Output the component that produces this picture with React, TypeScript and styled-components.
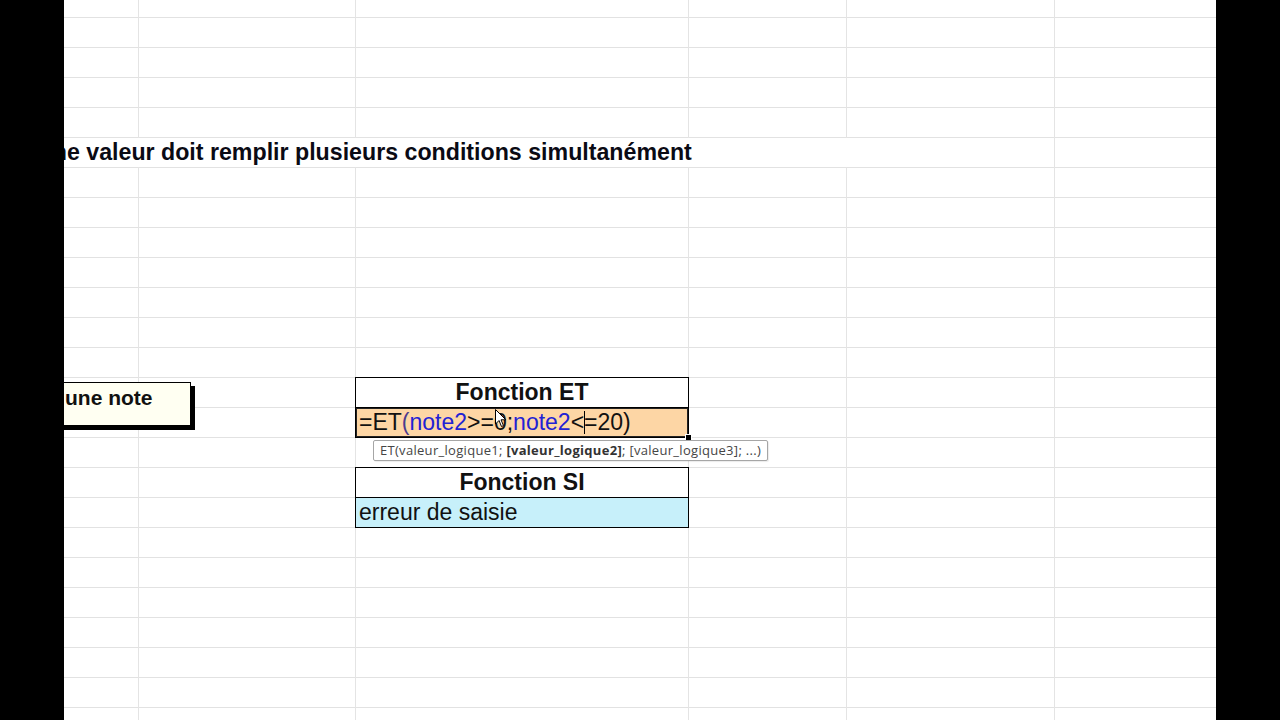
import styled, { createGlobalStyle } from 'styled-components'

const GlobalStyle = createGlobalStyle`
  html, body {
    margin: 0;
    background: #000;
  }
  body {
    font-family: 'Liberation Sans', Arial, sans-serif;
  }
`

const Screen = styled.div`
  display: flex;
  width: 1280px;
  height: 720px;
  background: #000;
`

const Letterbox = styled.div`
  flex: none;
  width: 64px;
  background: #000;
`

// feuille : lignes horizontales toutes les 30px en fond
const Sheet = styled.div`
  position: relative;
  flex: none;
  width: 1152px;
  height: 720px;
  overflow: hidden;
  background-color: #fff;
  background-image: linear-gradient(to bottom, transparent 29px, #e2e2e2 29px);
  background-size: 100% 30px;
  background-position: 0 -12px;
`

const Grid = styled.div`
  display: grid;
  grid-template-columns: 115px 217px 333px 158px 208px 300px;
  grid-template-rows: repeat(25, 30px);
  margin: -12px 0 0 -40px;
`

const ColumnLine = styled.div<{ $col: number }>`
  grid-column: ${(p) => p.$col};
  grid-row: 1 / -1;
  border-right: 1px solid #e4e4e4;
`

const Title = styled.div`
  grid-column: 1 / 5;
  grid-row: 6;
  height: 29px;
  padding-left: 12px;
  background: #fff;
  font-size: 23.2px;
  font-weight: bold;
  line-height: 29px;
  color: #0a0a14;
  white-space: nowrap;
`

const Table = styled.div<{ $row: number }>`
  grid-column: 3;
  grid-row: ${(p) => p.$row} / span 2;
  margin: -1px 0 0 -1px;
  border: 1px solid #000;
  display: flex;
  flex-direction: column;
  background: #fff;
  position: relative;
  z-index: 1;
`

const HeaderCell = styled.div`
  height: 29px;
  border-bottom: 1px solid #000;
  font-size: 23px;
  font-weight: bold;
  line-height: 29px;
  text-align: center;
  color: #111;
`

const BodyCell = styled.div<{ $fill: string; $selected?: boolean }>`
  position: relative;
  flex: 1;
  padding-left: 3px;
  background: ${(p) => p.$fill};
  box-shadow: ${(p) => (p.$selected ? 'inset 0 0 0 1px #222' : 'none')};
  font-size: 23px;
  line-height: 29px;
  color: #111;
  white-space: nowrap;
`

const Ref = styled.span`
  color: #2222d4;
`

const Paren = styled.span`
  color: #4b3a8e;
`

const Caret = styled.span`
  display: inline-block;
  width: 1px;
  height: 23px;
  margin-right: -1px;
  vertical-align: -4px;
  background: #000;
`

const FillHandle = styled.div`
  position: absolute;
  right: -4px;
  bottom: -4px;
  width: 5px;
  height: 5px;
  background: #000;
  border: 1px solid #fff;
`

const Pointer = styled.svg`
  position: absolute;
  left: 139px;
  top: 1px;
`

const Tooltip = styled.div`
  position: absolute;
  top: calc(100% + 3px);
  left: 17px;
  height: 19px;
  padding: 0 6px;
  border: 1px solid #a6a6a6;
  border-radius: 2px;
  background: #fff;
  box-shadow: 1px 1px 1px rgba(0, 0, 0, 0.08);
  font-family: 'Open Sans', 'Noto Sans', sans-serif;
  font-size: 13px;
  letter-spacing: 0.3px;
  line-height: 19px;
  color: #454545;
  white-space: nowrap;
`

const Current = styled.b`
  color: #333;
`

// forme flottante "Saisir une note"
const NoteShape = styled.div`
  position: absolute;
  left: -70px;
  top: 382px;
  width: 197px;
  height: 44px;
  box-sizing: border-box;
  padding-left: 7px;
  border: 1px solid #000;
  background: #fffff2;
  box-shadow: 4px 4px 0 #000;
  font-size: 21px;
  font-weight: bold;
  line-height: 29px;
  color: #111;
  white-space: nowrap;
`

export default function App() {
  return (
    <>
      <GlobalStyle />
      <Screen>
        <Letterbox />
        <Sheet>
          <Grid>
            {[1, 2, 3, 4, 5, 6].map((c) => (
              <ColumnLine key={c} $col={c} />
            ))}
            <Title>Une valeur doit remplir plusieurs conditions simultanément</Title>

            <Table $row={14}>
              <HeaderCell>Fonction ET</HeaderCell>
              <BodyCell $fill="#fdd6a5" $selected>
                =ET<Paren>(</Paren>
                <Ref>note2</Ref>&gt;=0;<Ref>note2</Ref>&lt;
                <Caret />
                =20)
                <Pointer width="12" height="19" viewBox="0 0 12 19">
                  <path d="M0.5 0.5 L0.5 15 L4 11.5 L6.5 17.5 L8.5 16.6 L6 10.8 L10.8 10.8 Z" fill="#fff" stroke="#000" strokeWidth="1" />
                </Pointer>
                <FillHandle />
                <Tooltip>
                  ET(valeur_logique1; <Current>[valeur_logique2]</Current>; [valeur_logique3]; ...)
                </Tooltip>
              </BodyCell>
            </Table>

            <Table $row={17}>
              <HeaderCell>Fonction SI</HeaderCell>
              <BodyCell $fill="#c7f0fa">erreur de saisie</BodyCell>
            </Table>
          </Grid>

          <NoteShape>Saisir une note</NoteShape>
        </Sheet>
        <Letterbox />
      </Screen>
    </>
  )
}
